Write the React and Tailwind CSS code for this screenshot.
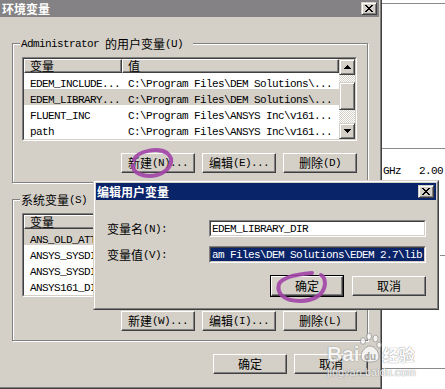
import React from 'react'

const CJK_RUN = /[\u3000-\u9fff\uff00-\uffef]+|[^\u3000-\u9fff\uff00-\uffef]+/g
const IS_CJK = /[\u3000-\u9fff\uff00-\uffef]/

// mixed text: CJK at 12px, ascii as 6px-wide mono cells (like SimSun)
function Txt({ s }) {
  const parts = s.match(CJK_RUN) || []
  return parts.map((p, i) =>
    IS_CJK.test(p) ? (
      <span key={i} className="font-['Noto_Sans_CJK_SC',sans-serif] text-[12px] leading-[12px]">{p}</span>
    ) : (
      <span key={i} className="font-['Liberation_Mono',monospace] text-[11px] leading-[12px] tracking-[-0.6px] whitespace-pre">{p}</span>
    )
  )
}

function CloseX() {
  return (
    <svg width="8" height="7" viewBox="0 0 8 7" shapeRendering="crispEdges">
      <path d="M0 0h2v1h-2z M6 0h2v1h-2z M1 1h2v1h-2z M5 1h2v1h-2z M2 2h4v1h-4z M3 3h2v1h-2z M2 4h4v1h-4z M1 5h2v1h-2z M5 5h2v1h-2z M0 6h2v1h-2z M6 6h2v1h-2z" fill="#000" />
    </svg>
  )
}

function CloseBtn() {
  return (
    <div className="w-[16px] h-[13px] bg-[#d4d0c8] border border-t-[#d4d0c8] border-l-[#d4d0c8] border-r-[#404040] border-b-[#404040] shadow-[inset_1px_1px_0_#fff,inset_-1px_-1px_0_#808080] flex items-center justify-center">
      <CloseX />
    </div>
  )
}

function Btn({ label, def }) {
  if (def) {
    return (
      <div className="w-[74px] h-[22px] border border-black">
        <div className="h-full border border-t-white border-l-white border-r-[#404040] border-b-[#404040] shadow-[inset_-1px_-1px_0_#808080] bg-[#d4d0c8] flex items-center justify-center">
          <Txt s={label} />
        </div>
      </div>
    )
  }
  return (
    <div className="w-[74px] h-[20px] border border-t-white border-l-white border-r-[#404040] border-b-[#404040] shadow-[inset_-1px_-1px_0_#808080] bg-[#d4d0c8] flex items-center justify-center">
      <Txt s={label} />
    </div>
  )
}

function Arrow({ down }) {
  return (
    <svg width="7" height="4" viewBox="0 0 7 4" shapeRendering="crispEdges">
      {down ? (
        <path d="M0 0h7v1h-1v1h-1v1h-1v1h-1v-1h-1v-1h-1v-1h-1z" fill="#000" />
      ) : (
        <path d="M3 0h1v1h1v1h1v1h1v1H0V3h1V2h1V1h1z" fill="#000" />
      )}
    </svg>
  )
}

const raisedSmall =
  'bg-[#d4d0c8] border border-t-[#d4d0c8] border-l-[#d4d0c8] border-r-[#404040] border-b-[#404040] shadow-[inset_1px_1px_0_#fff,inset_-1px_-1px_0_#808080]'

function ScrollBar() {
  return (
    <div className="w-[16px] h-full flex flex-col">
      <div className={`h-[16px] flex items-center justify-center ${raisedSmall}`}>
        <Arrow />
      </div>
      <div className="h-[7px] bg-[repeating-conic-gradient(#d4d0c8_0_25%,#ffffff_0_50%)] bg-[length:2px_2px]" />
      <div className={`h-[28px] ${raisedSmall}`} />
      <div className="flex-1 bg-[repeating-conic-gradient(#d4d0c8_0_25%,#ffffff_0_50%)] bg-[length:2px_2px]" />
      <div className={`h-[16px] flex items-center justify-center ${raisedSmall}`}>
        <Arrow down />
      </div>
    </div>
  )
}

function ListView({ rows, sel, valueHead = '值' }) {
  return (
    <div className="w-[335px] h-[84px] border border-t-[#808080] border-l-[#808080] border-r-white border-b-white">
      <div className="h-full border border-t-[#404040] border-l-[#404040] border-r-[#d4d0c8] border-b-[#d4d0c8] bg-white flex">
        <div className="flex-1 flex flex-col overflow-hidden">
          <div className="h-[14px] flex shrink-0">
            <div className="w-[98px] bg-[#d4d0c8] border border-t-white border-l-white border-r-[#404040] border-b-[#404040] shadow-[inset_-1px_-1px_0_#808080] pl-[5px] flex items-center">
              <Txt s="变量" />
            </div>
            <div className="flex-1 bg-[#d4d0c8] border border-t-white border-l-white border-r-[#404040] border-b-[#404040] shadow-[inset_-1px_-1px_0_#808080] pl-[5px] flex items-center">
              <Txt s={valueHead} />
            </div>
          </div>
          {rows.map((r, i) => (
            <div key={i} className={`h-[16px] shrink-0 flex items-center whitespace-nowrap ${i === sel ? 'bg-[#d4d0c8]' : ''}`}>
              <div className="w-[98px] pl-[6px] overflow-hidden">
                <Txt s={r[0]} />
              </div>
              <div className="flex-1 pl-[6px] overflow-hidden">
                <Txt s={r[1]} />
              </div>
            </div>
          ))}
        </div>
        <ScrollBar />
      </div>
    </div>
  )
}

function Group({ label, h, children }) {
  return (
    <div className={`relative w-[356px] ${h} border border-[#808080] shadow-[inset_1px_1px_0_#fff,1px_1px_0_#fff] pt-[13px] pl-[9px]`}>
      <div className="absolute top-[-7px] left-[7px] bg-[#d4d0c8] pl-px pr-[10px] h-[13px] flex items-center">
        <Txt s={label} />
      </div>
      {children}
    </div>
  )
}

const userRows = [
  ['EDEM_INCLUDE...', 'C:\\Program Files\\DEM Solutions\\...'],
  ['EDEM_LIBRARY...', 'C:\\Program Files\\DEM Solutions\\...'],
  ['FLUENT_INC', 'C:\\Program Files\\ANSYS Inc\\v161...'],
  ['path', 'C:\\Program Files\\ANSYS Inc\\v161...'],
]

// values are hidden under the edit dialog
const sysRows = [
  ['ANS_OLD_ATT', ''],
  ['ANSYS_SYSDI', ''],
  ['ANSYS_SYSDI', ''],
  ['ANSYS161_DI', ''],
]

function EditDialog() {
  return (
    <div className="absolute left-[93px] top-[180px] w-[346px] h-[130px] border border-t-[#d4d0c8] border-l-[#d4d0c8] border-r-[#404040] border-b-[#404040]">
      <div className="h-full border border-t-white border-l-white border-r-[#808080] border-b-[#808080] bg-[#d4d0c8] p-px flex flex-col">
        <div className="h-[17px] shrink-0 bg-[#0a246a] flex items-center justify-between pl-px pr-[2px] text-white font-bold">
          <div className="flex items-center">
            <Txt s="编辑用户变量" />
          </div>
          <CloseBtn />
        </div>
        <div className="pl-[11px] pr-[10px] flex flex-col">
          <div className="mt-[20px] flex items-center">
            <div className="w-[102px] flex items-center">
              <Txt s="变量名(N):" />
            </div>
            <div className="w-[217px] h-[17px] border border-t-[#808080] border-l-[#808080] border-r-white border-b-white">
              <div className="h-full border border-t-[#404040] border-l-[#404040] border-r-[#d4d0c8] border-b-[#d4d0c8] bg-white pl-px flex items-center overflow-hidden whitespace-nowrap">
                <Txt s="EDEM_LIBRARY_DIR" />
              </div>
            </div>
          </div>
          <div className="mt-[9px] flex items-center">
            <div className="w-[102px] flex items-center">
              <Txt s="变量值(V):" />
            </div>
            <div className="w-[217px] h-[17px] border border-t-[#808080] border-l-[#808080] border-r-white border-b-white">
              <div className="h-full border border-t-[#404040] border-l-[#404040] border-r-[#d4d0c8] border-b-[#d4d0c8] bg-white overflow-hidden">
                <div className="h-full bg-[#0a246a] text-white pl-px flex items-center whitespace-nowrap overflow-hidden">
                  <Txt s="am Files\DEM Solutions\EDEM 2.7\lib" />
                </div>
              </div>
            </div>
          </div>
          <div className="mt-[12px] flex items-center justify-end gap-[8px]">
            <Btn label="确定" def />
            <Btn label="取消" />
          </div>
        </div>
      </div>
    </div>
  )
}

// faint "Baidu经验" stamp, bottom right
function Watermark() {
  return (
    <div className="absolute left-[327px] top-[332px] opacity-75 pointer-events-none flex flex-col">
      <div className="flex items-end h-[31px]">
        <span className="text-white font-bold font-['Liberation_Sans',sans-serif] text-[21px] leading-[18px] [text-shadow:0_0_1px_#777,0_0_1px_#777]">
          Bai
        </span>
        <svg width="24" height="31" viewBox="0 0 24 31" className="ml-[-2px]">
          <g fill="#fff" stroke="#8c8c8c" strokeWidth="0.9">
            <ellipse cx="5" cy="9" rx="2.6" ry="3.4" />
            <ellipse cx="11" cy="4.5" rx="2.6" ry="3.4" />
            <ellipse cx="17.5" cy="6.5" rx="2.6" ry="3.4" />
            <ellipse cx="21" cy="13" rx="2.2" ry="3" />
            <path d="M3 25c0-6 5-11 9-11s9 5 9 11c0 3-3 5-9 5s-9-2-9-5z" />
          </g>
          <text x="12" y="28" textAnchor="middle" fontFamily="Liberation Sans, sans-serif" fontWeight="bold" fontSize="10" fill="#9a9a9a">du</text>
        </svg>
        <span className="ml-[1px] text-white font-bold font-['Noto_Sans_CJK_SC',sans-serif] text-[16px] leading-[18px] [text-shadow:0_0_1px_#777,0_0_1px_#777]">
          经验
        </span>
      </div>
      <div className="mt-[4px] text-white font-['Liberation_Sans',sans-serif] text-[11px] leading-[10px] [text-shadow:0_0_1px_#777,0_0_1px_#777]">
        jingyan.baidu.com
      </div>
    </div>
  )
}

export default function App() {
  return (
    <div className="relative w-[445px] h-[389px] overflow-hidden bg-white flex text-black select-none">
      {/* 环境变量 window */}
      <div className="w-[382px] h-[389px] shrink-0 border-r border-b border-[#404040]">
        <div className="h-full border-r border-b border-[#808080] bg-[#d4d0c8] pr-px flex flex-col">
          <div className="h-[17px] shrink-0 bg-[#848284] flex items-center justify-between pl-[2px] pr-[2px] text-white font-bold">
            <div className="flex items-center">
              <Txt s="环境变量" />
            </div>
            <CloseBtn />
          </div>
          <div className="pl-[12px] flex flex-col">
            <div className="mt-[26px]">
              <Group label="Administrator 的用户变量(U)" h="h-[140px]">
                <ListView rows={userRows} sel={1} />
                <div className="mt-[12px] w-[335px] flex justify-end gap-[7px]">
                  <Btn label="新建(N)..." />
                  <Btn label="编辑(E)..." />
                  <Btn label="删除(D)" />
                </div>
              </Group>
            </div>
            <div className="mt-[16px]">
              <Group label="系统变量(S)" h="h-[142px]">
                <ListView rows={sysRows} sel={0} valueHead="" />
                <div className="mt-[14px] w-[335px] flex justify-end gap-[7px]">
                  <Btn label="新建(W)..." />
                  <Btn label="编辑(I)..." />
                  <Btn label="删除(L)" />
                </div>
              </Group>
            </div>
            <div className="mt-[13px] w-[356px] flex justify-end gap-[7px]">
              <Btn label="确定" />
              <Btn label="取消" />
            </div>
          </div>
        </div>
      </div>

      {/* desktop behind */}
      <div className="flex-1 flex flex-col">
        <div className="mt-[3px] h-px bg-[#8a8a8a]" />
        <div className="mt-[144px] h-px bg-[#8a8a8a]" />
        <div className="mt-[16px] h-[12px] pl-px flex items-center whitespace-nowrap">
          <Txt s="GHz   2.00" />
        </div>
        <div className="mt-[78px] ml-[58px] h-px bg-[#8a8a8a]" />
        <div className="mt-[112px] h-px bg-[#8a8a8a]" />
      </div>

      <EditDialog />

      {/* purple marker circles */}
      <svg className="absolute inset-0 pointer-events-none" width="445" height="389" viewBox="0 0 445 389">
        <g fill="none" stroke="#a245a8" strokeWidth="4" strokeLinecap="round" opacity="0.9">
          <path d="M134 160 C137 151, 158 147, 167 153 C175 159, 171 171, 157 175 C144 178, 132 173, 133 165" />
          <path d="M312 273 C300 274, 283 276, 279 284 C276 294, 285 301, 300 301 C315 301, 324 294, 325 284 C325 279, 323 276, 321 275" />
        </g>
      </svg>

      <Watermark />
    </div>
  )
}
